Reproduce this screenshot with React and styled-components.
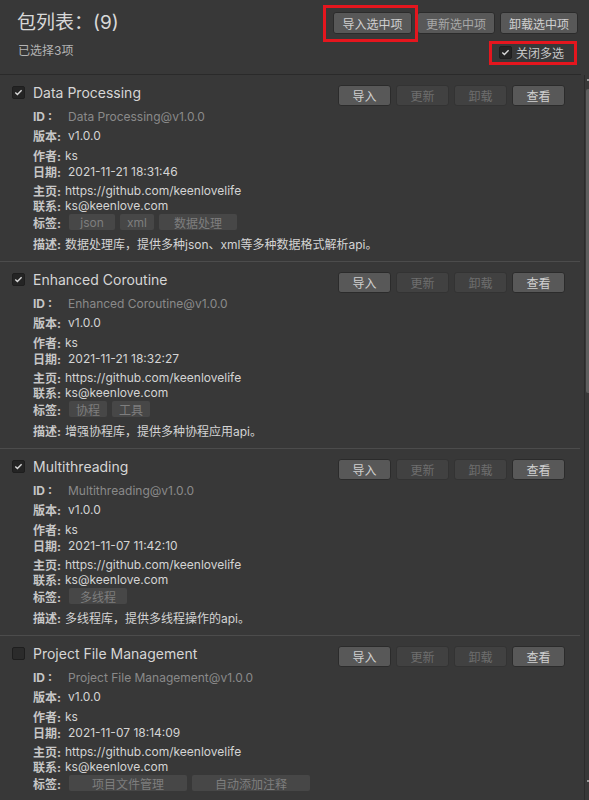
import React from 'react';
import styled, { createGlobalStyle } from 'styled-components';

const GlobalStyle = createGlobalStyle`
    html, body {
        margin: 0;
        height: 800px;
        overflow: hidden;
        background: #383838;
    }
    body {
        font-family: "Inter", "Noto Sans CJK SC", sans-serif;
        color: #d2d2d2;
    }
`;

const Page = styled.div`
    width: 589px;
    height: 800px;
    display: flex;
    flex-direction: column;
    background: #383838;
`;

const Header = styled.div`
    position: relative;
    height: 74px;
    display: flex;
    justify-content: space-between;
    padding: 0 3px 0 17px;
    border-bottom: 1px solid #2a2a2a;
    margin-right: 8px;
`;

const TitleBlock = styled.div`
    display: flex;
    flex-direction: column;
`;

const Title = styled.div`
    margin-top: 10px;
    font-size: 19px;
    line-height: 26px;
    color: #d8d8d8;
`;

const Selected = styled.div`
    margin-top: 7px;
    margin-left: 1px;
    font-size: 12px;
    line-height: 16px;
    color: #b4b4b4;
`;

const Actions = styled.div`
    display: flex;
    flex-direction: column;
    align-items: flex-end;
`;

const ButtonRow = styled.div`
    display: flex;
    gap: 5px;
    margin-top: 12px;
`;

const Button = styled.div`
    width: ${p => p.$w || 53}px;
    height: ${p => p.$h || 21}px;
    box-sizing: border-box;
    display: flex;
    align-items: center;
    justify-content: center;
    border-radius: 3px;
    border: 1px solid ${p => (p.$off ? '#333' : '#2b2b2b')};
    background: ${p => (p.$off ? '#414141' : '#585858')};
    color: ${p => (p.$off ? '#6e6e6e' : p.$dim ? '#a8a8a8' : '#d0d0d0')};
    font-size: 12px;
`;

const Toggle = styled.label`
    display: flex;
    align-items: center;
    gap: 4px;
    margin-top: 10px;
    margin-right: 14px;
    font-size: 12px;
    color: #c8c8c8;
`;

const Box = styled.span`
    width: 13px;
    height: 13px;
    box-sizing: border-box;
    border-radius: 2px;
    background: ${p => (p.$on ? '#242424' : '#2b2b2b')};
    border: 1px solid #1e1e1e;
    display: flex;
    align-items: center;
    justify-content: center;
    flex-shrink: 0;
`;

const Marker = styled.div`
    position: absolute;
    left: ${p => p.$x}px;
    top: ${p => p.$y}px;
    width: ${p => p.$w}px;
    height: ${p => p.$h}px;
    box-sizing: border-box;
    border: 3px solid #e5161e;
`;

const Body = styled.div`
    flex: 1;
    display: flex;
    min-height: 0;
`;

const List = styled.div`
    flex: 1;
    overflow: hidden;
`;

const Item = styled.div`
    padding: 10px 15px 10px 12px;
    border-bottom: 1px solid #4c4c4c;
    margin-right: 4px;
`;

const ItemHead = styled.div`
    display: flex;
    align-items: flex-start;
    height: 21px;
`;

const ItemTitle = styled.div`
    display: flex;
    align-items: center;
    gap: 8px;
    flex: 1;
    height: 13px;
    margin-top: 1px;
    font-size: 14px;
    color: #d6d6d6;
`;

const ItemButtons = styled.div`
    display: flex;
    gap: 5px;
`;

const Field = styled.div`
    display: flex;
    align-items: center;
    height: 16px;
    margin-top: ${p => p.$mt}px;
    padding-left: 21px;
    font-size: 12px;
    white-space: nowrap;
`;

const Label = styled.span`
    width: ${p => (p.$tight ? 32 : 35)}px;
    flex-shrink: 0;
    font-weight: 700;
    color: #c6c6c6;
`;

const Value = styled.span`
    color: ${p => (p.$muted ? '#8a8a8a' : '#d4d4d4')};
`;

const Tags = styled.div`
    display: flex;
    gap: 5px;
    margin-left: 1px;
`;

const Tag = styled.span`
    width: ${p => p.$w}px;
    height: 16px;
    display: flex;
    align-items: center;
    justify-content: center;
    background: #474747;
    color: #7e7e7e;
    border-radius: 2px;
`;

const Scroll = styled.div`
    position: relative;
    width: 4px;
    border-left: 1px solid #2b2b2b;
`;

const Thumb = styled.div`
    margin: 14px 0 0 1px;
    width: 3px;
    height: 304px;
    border-radius: 2px 0 0 2px;
    background: #5e5e5e;
`;

const Arrow = styled.div`
    position: absolute;
    left: 2px;
    top: ${p => p.$y}px;
    width: 2px;
    height: 2px;
    background: #9a9a9a;
`;

const Check = () => (
    <svg width="9" height="9" viewBox="0 0 9 9">
        <path d="M1.3 4.6 L3.4 6.6 L7.6 2.2" fill="none" stroke="#d8d8d8" strokeWidth="1.4" />
    </svg>
);

const packages = [
    {
        on: true,
        name: 'Data Processing',
        date: '2021-11-21 18:31:46',
        tags: [['json', 46], ['xml', 34], ['数据处理', 78]],
        desc: '数据处理库，提供多种json、xml等多种数据格式解析api。',
    },
    {
        on: true,
        name: 'Enhanced Coroutine',
        date: '2021-11-21 18:32:27',
        tags: [['协程', 38], ['工具', 38]],
        desc: '增强协程库，提供多种协程应用api。',
    },
    {
        on: true,
        name: 'Multithreading',
        date: '2021-11-07 11:42:10',
        tags: [['多线程', 58]],
        desc: '多线程库，提供多线程操作的api。',
    },
    {
        on: false,
        name: 'Project File Management',
        date: '2021-11-07 18:14:09',
        tags: [['项目文件管理', 118], ['自动添加注释', 118]],
        desc: null,
    },
];

const Package = ({ pkg }) => (
    <Item>
        <ItemHead>
            <ItemTitle>
                <Box $on={pkg.on}>{pkg.on ? <Check /> : null}</Box>
                {pkg.name}
            </ItemTitle>
            <ItemButtons>
                <Button>导入</Button>
                <Button $off>更新</Button>
                <Button $off>卸载</Button>
                <Button>查看</Button>
            </ItemButtons>
        </ItemHead>
        <Field $mt={2}>
            <Label>ID :</Label>
            <Value $muted>{pkg.name}@v1.0.0</Value>
        </Field>
        <Field $mt={3}>
            <Label>版本:</Label>
            <Value>v1.0.0</Value>
        </Field>
        <Field $mt={4}>
            <Label $tight>作者:</Label>
            <Value>ks</Value>
        </Field>
        <Field $mt={0}>
            <Label>日期:</Label>
            <Value>{pkg.date}</Value>
        </Field>
        <Field $mt={3}>
            <Label $tight>主页:</Label>
            <Value>https://github.com/keenlovelife</Value>
        </Field>
        <Field $mt={-1}>
            <Label $tight>联系:</Label>
            <Value>ks@keenlove.com</Value>
        </Field>
        <Field $mt={1}>
            <Label>标签:</Label>
            <Tags>
                {pkg.tags.map(([t, w]) => (
                    <Tag key={t} $w={w}>{t}</Tag>
                ))}
            </Tags>
        </Field>
        {pkg.desc ? (
            <Field $mt={5}>
                <Label $tight>描述:</Label>
                <Value>{pkg.desc}</Value>
            </Field>
        ) : null}
    </Item>
);

const App = () => (
    <Page>
        <GlobalStyle />
        <Header>
            <TitleBlock>
                <Title>包列表：(9)</Title>
                <Selected>已选择3项</Selected>
            </TitleBlock>
            <Actions>
                <ButtonRow>
                    <Button $w={79} $h={22}>导入选中项</Button>
                    <Button $w={78} $h={22} $dim>更新选中项</Button>
                    <Button $w={78} $h={22}>卸载选中项</Button>
                </ButtonRow>
                <Toggle>
                    <Box $on><Check /></Box>
                    关闭多选
                </Toggle>
            </Actions>
            <Marker $x={323} $y={5} $w={95} $h={37} />
            <Marker $x={489} $y={41} $w={88} $h={24} />
        </Header>
        <Body>
            <List>
                {packages.map(p => (
                    <Package key={p.name} pkg={p} />
                ))}
            </List>
            <Scroll>
                <Arrow $y={4} />
                <Thumb />
                <Arrow $y={705} />
            </Scroll>
        </Body>
    </Page>
);

export default App;
